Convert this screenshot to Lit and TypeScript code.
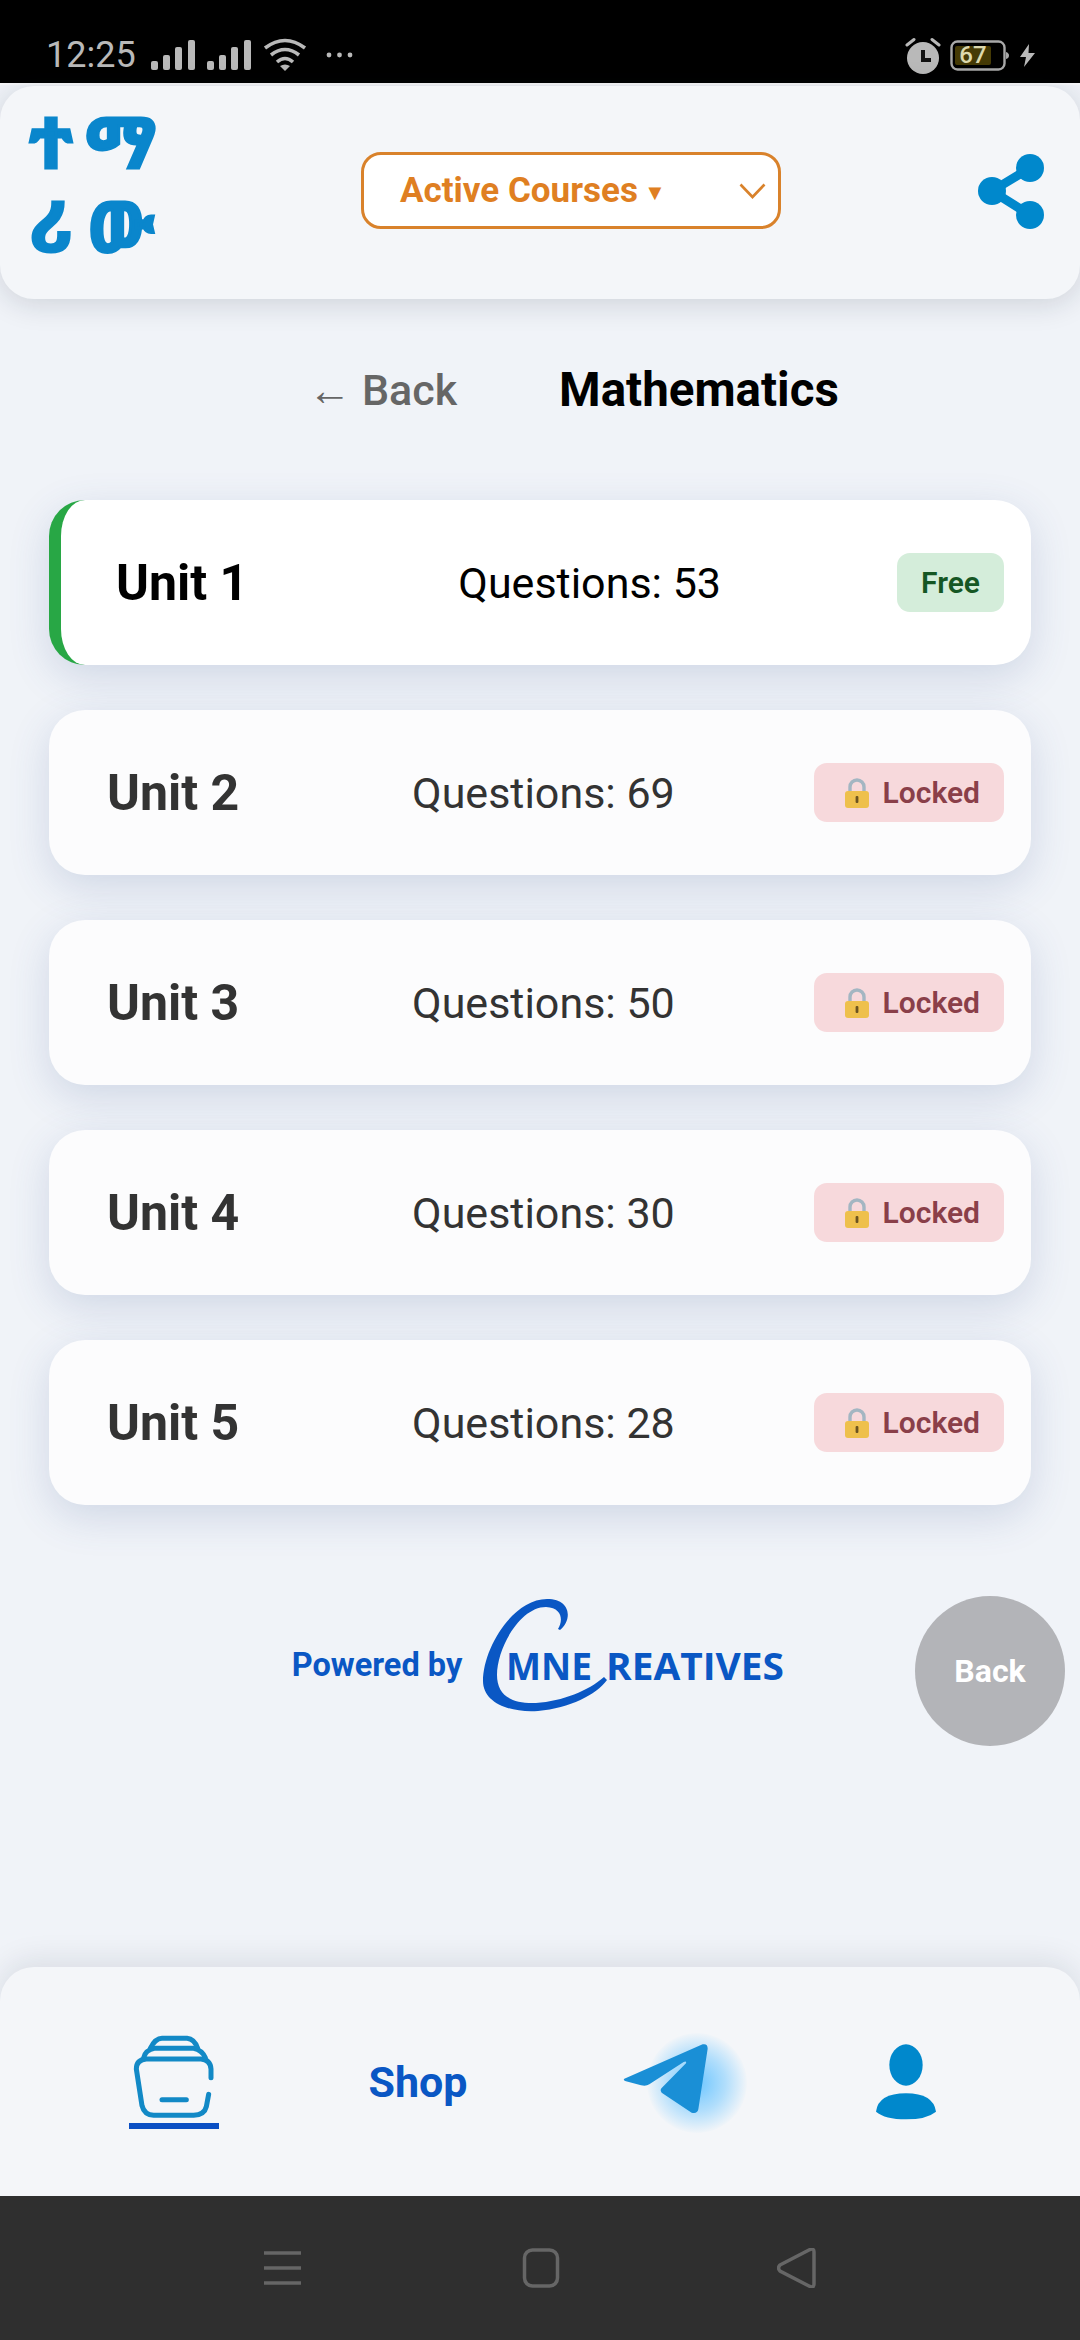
import { LitElement, css, html, svg } from 'lit';
import { customElement } from 'lit/decorators.js';

interface Unit {
  name: string;
  questions: number;
  free: boolean;
}

const UNITS: Unit[] = [
  { name: 'Unit 1', questions: 53, free: true },
  { name: 'Unit 2', questions: 69, free: false },
  { name: 'Unit 3', questions: 50, free: false },
  { name: 'Unit 4', questions: 30, free: false },
  { name: 'Unit 5', questions: 28, free: false },
];

const signalIcon = svg`
  <rect x="0" y="21" width="7" height="9" rx="2"/>
  <rect x="12" y="15" width="7" height="15" rx="2"/>
  <rect x="24" y="7" width="7" height="23" rx="2"/>
  <rect x="37" y="0" width="7" height="30" rx="2"/>
`;

@customElement('app-root')
export class AppRoot extends LitElement {
  static styles = css`
    :host {
      display: block;
      position: relative;
      width: 1080px;
      height: 2340px;
      overflow: hidden;
      background: #f0f3f8;
      font-family: Roboto, 'Noto Sans', sans-serif;
    }

    .page {
      display: flex;
      flex-direction: column;
      height: 100%;
    }

    .status {
      flex: none;
      display: flex;
      align-items: center;
      height: 83px;
      padding: 27px 45px 0 46px;
      box-sizing: border-box;
      background: #000;
      color: #b9b9b9;
    }

    .time {
      font-size: 36px;
      line-height: 36px;
      margin-right: 15px;
    }

    .signal {
      width: 44px;
      height: 30px;
      fill: #b9b9b9;
      margin-right: 12px;
    }

    .wifi {
      width: 44px;
      height: 34px;
      margin-right: 19px;
    }

    .dots {
      width: 27px;
      height: 6px;
      fill: #b9b9b9;
    }

    .status-right {
      margin-left: auto;
      display: flex;
      align-items: center;
    }

    .alarm {
      width: 36px;
      height: 37px;
      margin-right: 9px;
    }

    .battery {
      position: relative;
      width: 59px;
      height: 31px;
      margin-right: 10px;
    }

    .battery svg {
      display: block;
    }

    .battery span {
      position: absolute;
      left: 5px;
      top: 0;
      width: 36px;
      line-height: 31px;
      text-align: center;
      font-size: 24px;
      font-weight: 500;
      color: #dcd8ac;
    }

    .bolt {
      width: 16px;
      height: 23px;
      fill: #b9b9b9;
    }

    .hairline {
      flex: none;
      height: 2px;
      background: #f7f8fa;
    }

    .header {
      flex: none;
      display: flex;
      align-items: center;
      justify-content: space-between;
      height: 213px;
      margin-top: 1px;
      padding: 0 36px 0 18px;
      box-sizing: border-box;
      border-radius: 34px;
      background: #f4f6f9;
      box-shadow: 0 4px 30px rgba(20, 30, 50, 0.16);
      position: relative;
    }

    .brand {
      display: grid;
      grid-template-columns: 66px 74px;
      grid-auto-rows: 84px;
      justify-items: center;
      align-items: center;
      margin-top: -20px;
      color: #0a86cc;
      font-family: 'Noto Sans Ethiopic', 'Noto Sans', 'DejaVu Sans', sans-serif;
      font-size: 70px;
      font-weight: 700;
      line-height: 84px;
      -webkit-text-stroke: 3px #0a86cc;
    }

    .select {
      display: flex;
      align-items: center;
      justify-content: space-between;
      width: 420px;
      height: 77px;
      margin-top: -4px;
      margin-left: 6px;
      padding: 0 12px 0 36px;
      box-sizing: border-box;
      border: 3px solid #d9822b;
      border-radius: 20px;
      background: #fff;
      color: #df7f22;
      font-size: 35px;
      font-weight: 700;
    }

    .caret {
      font-size: 22px;
      margin-left: 6px;
      vertical-align: 2px;
    }

    .select svg {
      width: 27px;
      height: 16px;
    }

    .share {
      width: 66px;
      height: 76px;
      margin-top: -2px;
    }

    .title-row {
      flex: none;
      display: flex;
      justify-content: center;
      align-items: center;
      gap: 102px;
      height: 92px;
      margin-top: 45px;
      padding-left: 67px;
    }

    .back-link {
      color: #666;
      font-size: 43px;
      font-weight: 500;
    }

    .subject {
      color: #000;
      font-size: 47.5px;
      font-weight: 700;
    }

    .units {
      flex: none;
      display: flex;
      flex-direction: column;
      gap: 45px;
      margin-top: 64px;
      padding: 0 49px;
    }

    .unit {
      display: flex;
      align-items: center;
      justify-content: space-between;
      height: 165px;
      padding: 0 27px 0 58px;
      box-sizing: border-box;
      border-radius: 36px;
      background: #fcfcfd;
      box-shadow: 0 12px 40px rgba(60, 90, 150, 0.18);
      color: #333;
    }

    .unit.active {
      padding-left: 55px;
      border-left: 12px solid #28a745;
      background: #fff;
      color: #000;
    }

    .unit-name {
      font-size: 50px;
      font-weight: 700;
    }

    .unit-count {
      margin-left: 34px;
      font-size: 43px;
    }

    .badge {
      display: flex;
      align-items: center;
      gap: 13px;
      height: 59px;
      padding: 0 24px;
      border-radius: 13px;
      font-size: 30px;
      font-weight: 600;
    }

    .badge.free {
      background: #d4edda;
      color: #155724;
    }

    .badge.locked {
      padding: 0 24px 0 30px;
      background: #f7d9dc;
      color: #8a3f49;
    }

    .badge svg {
      width: 26px;
      height: 32px;
    }

    .powered {
      flex: none;
      display: flex;
      align-items: center;
      justify-content: center;
      gap: 16px;
      margin-top: 88px;
      color: #0a57c4;
      font-size: 32.5px;
      font-weight: 700;
    }

    .powered span {
      padding-top: 24px;
    }

    .powered svg {
      width: 310px;
      height: 120px;
    }

    .logo-text {
      font-family: 'Open Sans', sans-serif;
      font-size: 38px;
      font-weight: 700;
      fill: #0a57c4;
    }

    .float-back {
      position: absolute;
      left: 915px;
      top: 1596px;
      width: 150px;
      height: 150px;
      display: flex;
      align-items: center;
      justify-content: center;
      border-radius: 50%;
      background: #b3b4b8;
      color: #fff;
      font-size: 32px;
      font-weight: 700;
    }

    .nav {
      flex: none;
      display: grid;
      grid-template-columns: repeat(4, 1fr);
      align-items: center;
      justify-items: center;
      height: 229px;
      margin-top: auto;
      padding: 0 52px;
      box-sizing: border-box;
      border-radius: 34px 34px 0 0;
      background: #f4f6f9;
      box-shadow: 0 -6px 30px rgba(20, 30, 50, 0.1);
    }

    .nav-cell {
      display: flex;
      flex-direction: column;
      align-items: center;
      position: relative;
    }

    .home-icon {
      width: 85px;
      height: 85px;
    }

    .underline {
      width: 90px;
      height: 6px;
      margin-top: 3px;
      background: #0a4fc4;
    }

    .shop {
      color: #0a57c4;
      font-size: 43px;
      font-weight: 700;
    }

    .telegram {
      width: 90px;
      height: 75px;
      position: relative;
      margin: -6px 0 0 8px;
    }

    .telegram svg {
      position: relative;
      display: block;
    }

    .glow {
      position: absolute;
      left: 26px;
      top: -8px;
      width: 100px;
      height: 100px;
      border-radius: 50%;
      background: radial-gradient(circle, #6ec6ff 0%, rgba(110, 198, 255, 0.5) 40%, rgba(110, 198, 255, 0) 72%);
    }

    .person {
      width: 60px;
      height: 76px;
    }

    .sysbar {
      flex: none;
      display: flex;
      height: 144px;
      background: #2f2f2f;
      position: relative;
    }

    .sysbar svg {
      position: absolute;
      top: 52px;
      width: 40px;
      height: 40px;
      fill: none;
      stroke: #666;
      stroke-width: 3.5;
    }

    .sys-menu {
      left: 263px;
    }

    .sys-home {
      left: 521px;
    }

    .sys-back {
      left: 777px;
    }
  `;

  render() {
    return html`
      <div class="page">
        ${this.renderStatus()}
        <div class="hairline"></div>
        ${this.renderHeader()}
        <div class="title-row">
          <span class="back-link">← Back</span>
          <span class="subject">Mathematics</span>
        </div>
        <div class="units">${UNITS.map((unit) => this.renderUnit(unit))}</div>
        ${this.renderPowered()}
        ${this.renderNav()}
        <div class="sysbar">
          <svg class="sys-menu" viewBox="0 0 40 40">
            <path d="M1 5h37M1 20h37M1 35h37" />
          </svg>
          <svg class="sys-home" viewBox="0 0 40 40">
            <rect x="3.5" y="2" width="33" height="36" rx="8" />
          </svg>
          <svg class="sys-back" viewBox="0 0 40 40">
            <path d="M3 17 L33 1.5 Q37 0 37 4 V36 Q37 40 33 38.5 L3 23 Q0 20 3 17Z" />
          </svg>
        </div>
      </div>
      <div class="float-back">Back</div>
    `;
  }

  private renderStatus() {
    return html`
      <div class="status">
        <span class="time">12:25</span>
        <svg class="signal" viewBox="0 0 44 30">${signalIcon}</svg>
        <svg class="signal" viewBox="0 0 44 30">${signalIcon}</svg>
        <svg class="wifi" viewBox="0 0 44 34" fill="none" stroke="#b9b9b9" stroke-width="3.6">
          <path d="M2 10 Q22 -5 42 10" />
          <path d="M8 17 Q22 6 36 17" />
          <path d="M14 24 Q22 17 30 24" />
          <path d="M22 33 L17 28 Q22 25 27 28Z" fill="#b9b9b9" stroke="none" />
        </svg>
        <svg class="dots" viewBox="0 0 27 6">
          <circle cx="3" cy="3" r="2.4" />
          <circle cx="13.5" cy="3" r="2.4" />
          <circle cx="24" cy="3" r="2.4" />
        </svg>
        <div class="status-right">
          <svg class="alarm" viewBox="0 0 36 37">
            <circle cx="18" cy="21" r="16" fill="#b9b9b9" />
            <path d="M2 8 L9 2.5 M34 8 L27 2.5" stroke="#b9b9b9" stroke-width="3" fill="none" stroke-linecap="round" />
            <path d="M16 13 h4 v8 h6 v4 h-10z" fill="#111" />
          </svg>
          <div class="battery">
            <svg width="59" height="31" viewBox="0 0 59 31">
              <rect x="1.5" y="1.5" width="53" height="28" rx="6" fill="none" stroke="#a9a9a9" stroke-width="2.4" />
              <rect x="5" y="6" width="36" height="19" rx="2" fill="#453a05" />
              <path d="M56 12 q3 1 3 3.5 t-3 3.5z" fill="#a9a9a9" />
            </svg>
            <span>67</span>
          </div>
          <svg class="bolt" viewBox="0 0 16 23">
            <path d="M10 0 L1 13 H7 L5 23 L16 9 H9.5Z" />
          </svg>
        </div>
      </div>
    `;
  }

  private renderHeader() {
    return html`
      <div class="header">
        <div class="brand">
          <span>ተ</span><span>ማ</span>
          <span>ሪ</span><span>ው</span>
        </div>
        <div class="select">
          <span>Active Courses<span class="caret">▼</span></span>
          <svg viewBox="0 0 27 16" fill="none" stroke="#d9822b" stroke-width="2.6">
            <path d="M1.5 1.5 L13.5 14 L25.5 1.5" />
          </svg>
        </div>
        <svg class="share" viewBox="0 0 66 76" fill="#0088cc" stroke="#0088cc">
          <path d="M52 14 L14 37 L52 61" fill="none" stroke-width="9" />
          <circle cx="52" cy="14" r="14" stroke="none" />
          <circle cx="14" cy="37" r="14" stroke="none" />
          <circle cx="52" cy="61" r="14" stroke="none" />
        </svg>
      </div>
    `;
  }

  private renderUnit(unit: Unit) {
    return html`
      <div class="unit ${unit.free ? 'active' : ''}">
        <span class="unit-name">${unit.name}</span>
        <span class="unit-count">Questions: ${unit.questions}</span>
        ${unit.free
          ? html`<span class="badge free">Free</span>`
          : html`<span class="badge locked">${this.lockIcon()}Locked</span>`}
      </div>
    `;
  }

  private lockIcon() {
    return html`
      <svg viewBox="0 0 26 32">
        <path d="M6 16 V10 a7 7 0 0 1 14 0 V16" fill="none" stroke="#a3b6c2" stroke-width="3.4" />
        <rect x="1" y="14" width="24" height="17" rx="3" fill="#eec04c" />
        <rect x="11.6" y="19" width="2.8" height="7" rx="1" fill="#6b5320" />
      </svg>
    `;
  }

  private renderPowered() {
    return html`
      <div class="powered">
        <span>Powered by</span>
        <svg viewBox="480 1590 310 120">
          <path
            fill="#0a57c4"
            d="M562 1627 C574 1618 574 1596 549 1596 C515 1596 485 1645 485 1678 C485 1699 510 1710 540 1708 C572 1705 598 1692 609 1677 L606 1674 C590 1688 565 1698 538 1700 C513 1701 499 1692 499 1672 C499 1645 522 1604 548 1604 C565 1605 565 1618 560 1626 Z"
          />
          <text class="logo-text" x="508" y="1677" textLength="86" lengthAdjust="spacingAndGlyphs">MNE</text>
          <text class="logo-text" x="608" y="1677" textLength="178" lengthAdjust="spacingAndGlyphs">REATIVES</text>
        </svg>
      </div>
    `;
  }

  private renderNav() {
    return html`
      <div class="nav">
        <div class="nav-cell">
          <svg class="home-icon" viewBox="125 200 255 255" fill="none" stroke="#1289c6" stroke-width="15" stroke-linecap="round">
            <path d="M362 328 V302 Q360 274 332 272 H168 Q138 274 138 302 L155 412 Q162 440 190 441 H310 Q342 440 348 415 L355 378" />
            <path d="M215 394 H288" />
            <path d="M160 268 Q165 245 192 240 H310 Q335 245 345 268" />
            <path d="M180 240 Q195 210 215 210 H290 Q312 212 322 240" />
          </svg>
          <div class="underline"></div>
        </div>
        <div class="nav-cell"><span class="shop">Shop</span></div>
        <div class="nav-cell">
          <div class="telegram">
            <div class="glow"></div>
            <svg width="90" height="75" viewBox="120 205 270 225" fill="#1a8fd6">
              <path d="M130 318 L365 215 Q380 212 380 228 L352 410 Q348 425 332 420 L242 360 Q236 352 242 346 L315 272 Q318 264 308 268 L205 335 Q195 342 180 338 L135 326 Q125 322 130 318Z" />
            </svg>
          </div>
        </div>
        <div class="nav-cell">
          <svg class="person" viewBox="888 222 180 228" fill="#0088cc">
            <ellipse cx="978" cy="285" rx="50" ry="62" />
            <path d="M888 425 Q895 370 978 370 Q1060 370 1068 425 Q1040 448 978 448 Q915 448 888 425Z" />
          </svg>
        </div>
      </div>
    `;
  }
}

declare global {
  interface HTMLElementTagNameMap {
    'app-root': AppRoot;
  }
}
